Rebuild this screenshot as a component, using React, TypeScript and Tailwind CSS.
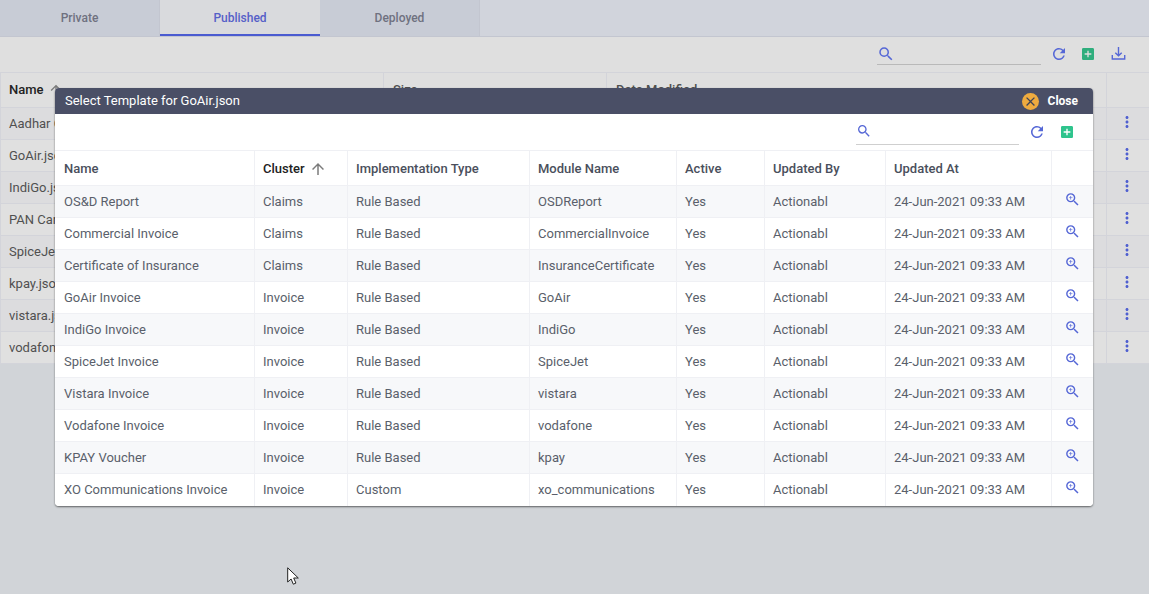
import { MdAddBox, MdClose, MdMoreVert, MdRefresh, MdSearch, MdZoomIn, MdArrowUpward } from "react-icons/md";

const files = ["Aadhar Card.json", "GoAir.json", "IndiGo.json", "PAN Card.json", "SpiceJet.json", "kpay.json", "vistara.json", "vodafone.json"];

const templates = [
  ["OS&D Report", "Claims", "Rule Based", "OSDReport"],
  ["Commercial Invoice", "Claims", "Rule Based", "CommercialInvoice"],
  ["Certificate of Insurance", "Claims", "Rule Based", "InsuranceCertificate"],
  ["GoAir Invoice", "Invoice", "Rule Based", "GoAir"],
  ["IndiGo Invoice", "Invoice", "Rule Based", "IndiGo"],
  ["SpiceJet Invoice", "Invoice", "Rule Based", "SpiceJet"],
  ["Vistara Invoice", "Invoice", "Rule Based", "vistara"],
  ["Vodafone Invoice", "Invoice", "Rule Based", "vodafone"],
  ["KPAY Voucher", "Invoice", "Rule Based", "kpay"],
  ["XO Communications Invoice", "Invoice", "Custom", "xo_communications"],
];

const DownloadIcon = ({ className }: { className: string }) => (
  <svg viewBox="0 0 14 14" className={className} fill="none" stroke="currentColor" strokeWidth="1.3">
    <path d="M7 1v8M4 6.2 7 9.2l3-3" />
    <path d="M1.2 8.5v3.6h11.6V8.5" />
  </svg>
);

const App = () => {
  return (
    <div className="relative h-[594px] w-[1149px] overflow-hidden bg-[#d1d4d8] font-['Roboto',sans-serif] text-[13px] text-[#505050]">
      {/* Tabs */}
      <div className="flex h-[37px] border-b border-[#c3c6d0] bg-[#d1d4dc]">
        <div className="flex h-[36px] w-[160px] items-center justify-center border-r border-[#c3c6d0] bg-[#c8ccd6] text-xs font-medium text-[#6f7180]">Private</div>
        <div className="flex h-[36px] w-[160px] items-center justify-center border-b-2 border-[#4a5bd0] bg-[#d9dadd] pt-[2px] text-xs font-medium text-[#5560c8]">Published</div>
        <div className="flex h-[36px] w-[160px] items-center justify-center border-r border-[#c3c6d0] bg-[#c8ccd6] text-xs font-medium text-[#6f7180]">Deployed</div>
      </div>

      {/* Toolbar */}
      <div className="flex h-[35px] items-center justify-end bg-[#dfdfdf] pb-[2px] pr-[23px] text-[#5567d6]">
        <div className="mr-[9px] mt-[1px] flex h-[22px] w-[164px] items-center border-b border-[#b9b9b9]">
          <MdSearch className="text-[18px]" />
        </div>
        <MdRefresh className="mr-[12px] text-[18px]" />
        <MdAddBox className="mr-[15px] text-[16px] text-[#2fae7d]" />
        <DownloadIcon className="h-[15px] w-[15px]" />
      </div>

      {/* Files table */}
      <table className="w-[1149px] table-fixed border-collapse">
        <colgroup>
          <col className="w-[383px]" />
          <col className="w-[223px]" />
          <col className="w-[500px]" />
          <col className="w-[43px]" />
        </colgroup>
        <thead>
          <tr className="h-[35px] bg-[#dfdfdf] text-left font-medium">
            <th className="border border-[#d3d4da] pl-[8px] font-medium text-[#222]">
              <span className="inline-flex items-center gap-[4px]">Name <MdArrowUpward className="text-[16px] text-[#7b7b7b]" /></span>
            </th>
            <th className="border border-[#d3d4da] pl-[9px] font-medium">Size</th>
            <th className="border border-[#d3d4da] pl-[9px] font-medium">Date Modified</th>
            <th className="border border-[#d3d4da]"></th>
          </tr>
        </thead>
        <tbody>
          {files.map((f, i) => (
            <tr key={f} className={`h-[32px] ${i % 2 === 0 ? "bg-[#dcdcde]" : "bg-[#e0e0e0]"}`}>
              <td className="border border-[#d3d4da] pl-[8px]">{f}</td>
              <td className="border border-[#d3d4da]"></td>
              <td className="border border-[#d3d4da]"></td>
              <td className="border border-[#d3d4da] pl-[11px] text-[#4f5fd0]"><MdMoreVert className="mb-[3px] text-[18px]" /></td>
            </tr>
          ))}
        </tbody>
      </table>

      {/* Dialog */}
      <div className="absolute left-[55px] top-[88px] w-[1038px] overflow-hidden rounded-[4px] bg-white shadow-[0_1px_2px_rgba(0,0,0,0.55)]">
        <div className="flex h-[26px] items-center justify-between bg-[#4a4f66] pl-[10px] pr-[15px] text-white">
          <span>Select Template for GoAir.json</span>
          <div className="flex items-center gap-[9px]">
            <span className="flex h-[17px] w-[17px] items-center justify-center rounded-full bg-[#eeab3f] text-[#3f4356]"><MdClose className="text-[15px]" /></span>
            <span className="text-xs font-bold">Close</span>
          </div>
        </div>
        <div className="flex h-[36px] items-center justify-end pr-[18px] text-[#5567d6]">
          <div className="mr-[9px] flex h-[25px] w-[163px] items-center border-b border-[#cfcfcf] pb-[2px]">
            <MdSearch className="text-[16px]" />
          </div>
          <MdRefresh className="mr-[13px] text-[18px]" />
          <MdAddBox className="text-[16px] text-[#2fc48d]" />
        </div>
        <table className="w-[1038px] table-fixed border-collapse">
          <colgroup>
            <col className="w-[199px]" />
            <col className="w-[93px]" />
            <col className="w-[182px]" />
            <col className="w-[147px]" />
            <col className="w-[88px]" />
            <col className="w-[121px]" />
            <col className="w-[166px]" />
            <col className="w-[42px]" />
          </colgroup>
          <thead>
            <tr className="h-[35px] border-t border-[#eff0f4] text-left text-[#4a4f5c]">
              <th className="border-r border-[#eff0f4] pl-[9px] pt-[2px] font-medium">Name</th>
              <th className="border-r border-[#eff0f4] pl-[8.5px] pt-[2px] font-medium text-[#222]">
                <span className="inline-flex items-center gap-[4px]">Cluster <MdArrowUpward className="text-[18px] text-[#7b7b7b]" /></span>
              </th>
              <th className="border-r border-[#eff0f4] pl-[8.5px] pt-[2px] font-medium">Implementation Type</th>
              <th className="border-r border-[#eff0f4] pl-[8.5px] pt-[2px] font-medium">Module Name</th>
              <th className="border-r border-[#eff0f4] pl-[8.5px] pt-[2px] font-medium">Active</th>
              <th className="border-r border-[#eff0f4] pl-[8.5px] pt-[2px] font-medium">Updated By</th>
              <th className="border-r border-[#eff0f4] pl-[8.5px] pt-[2px] font-medium">Updated At</th>
              <th></th>
            </tr>
          </thead>
          <tbody className="text-[#5a5f6b]">
            {templates.map((t, i) => (
              <tr key={t[0]} className={`h-[32px] border-t border-[#eff0f4] ${i % 2 === 0 ? "bg-[#f7f8fa]" : "bg-white"}`}>
                <td className="border-r border-[#eff0f4] pl-[9px]">{t[0]}</td>
                <td className="border-r border-[#eff0f4] pl-[8.5px]">{t[1]}</td>
                <td className="border-r border-[#eff0f4] pl-[8.5px]">{t[2]}</td>
                <td className="border-r border-[#eff0f4] pl-[8.5px]">{t[3]}</td>
                <td className="border-r border-[#eff0f4] pl-[8.5px]">Yes</td>
                <td className="border-r border-[#eff0f4] pl-[8.5px]">Actionabl</td>
                <td className="border-r border-[#eff0f4] pl-[8.5px]">24-Jun-2021 09:33 AM</td>
                <td className="pl-[12px] text-[#5567d6]"><MdZoomIn className="mb-[4px] text-[17px]" /></td>
              </tr>
            ))}
          </tbody>
        </table>
      </div>

      {/* Mouse pointer */}
      <svg viewBox="0 0 14 20" className="absolute left-[287px] top-[567px] h-[20px] w-[14px]" fill="#fff" stroke="#222" strokeWidth="1">
        <path d="M0.7 0.8V15l3.4-3 2.2 5.2 2.6-1.1-2.2-5.1h4.6z" />
      </svg>
    </div>
  );
};

export default App;
